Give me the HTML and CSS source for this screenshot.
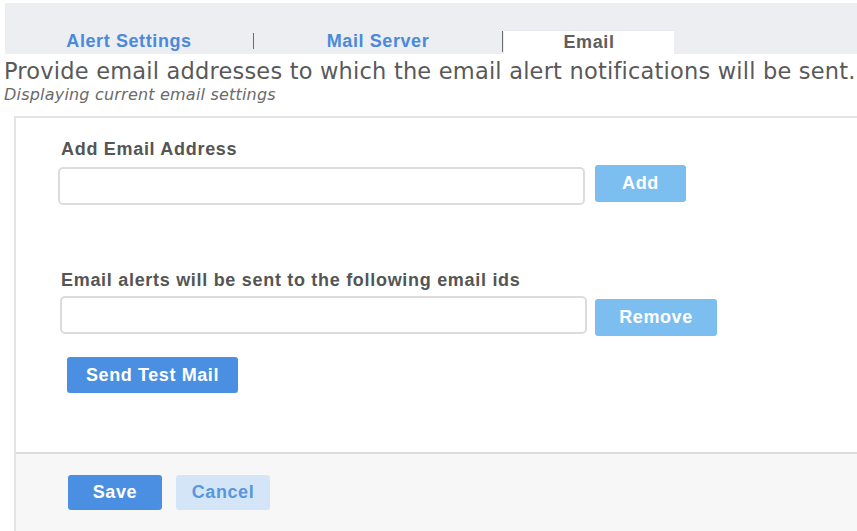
FILE: index.html
```html
<!DOCTYPE html>
<html lang="en">
<head>
<meta charset="utf-8">
<title>Email Settings</title>
<link rel="stylesheet" href="styles.css">
</head>
<body>
  <nav class="tabbar">
    <a class="tab">Alert Settings</a>
    <span class="sep"></span>
    <a class="tab">Mail Server</a>
    <span class="sep sep-tall"></span>
    <a class="tab tab-active">Email</a>
  </nav>

  <h1 class="intro">Provide email addresses to which the email alert notifications will be sent.</h1>
  <p class="status">Displaying current email settings</p>

  <section class="panel">
    <div class="panel-body">
      <label class="field-label">Add Email Address</label>
      <div class="field-row">
        <input class="text-input" type="text">
        <button class="btn btn-light btn-add">Add</button>
      </div>

      <label class="field-label label-list">Email alerts will be sent to the following email ids</label>
      <div class="field-row row-list">
        <input class="text-input input-list" type="text">
        <button class="btn btn-light btn-remove">Remove</button>
      </div>

      <button class="btn btn-primary btn-test">Send Test Mail</button>
    </div>
    <footer class="panel-footer">
      <button class="btn btn-primary btn-save">Save</button>
      <button class="btn btn-soft btn-cancel">Cancel</button>
    </footer>
  </section>
</body>
</html>
```

FILE: styles.css
```css
html, body {
  margin: 0;
  padding: 0;
  background: #ffffff;
  font-family: "Liberation Sans", Arial, sans-serif;
  overflow: hidden;
}

/* top tab strip */
.tabbar {
  margin: 3px 0 0 5px;
  height: 51px;
  background: #eceef1;
  display: flex;
  align-items: flex-end;
}

.tab {
  width: 248px;
  text-align: center;
  font-weight: bold;
  font-size: 18px;
  letter-spacing: 0.6px;
  color: #4b89dc;
  line-height: 22px;
  padding-bottom: 2px;
}

.sep {
  width: 1px;
  height: 16px;
  background: #6b6b6b;
  align-self: flex-end;
  margin-bottom: 5px;
}

.sep-tall {
  height: 21px;
  margin-bottom: 2px;
}

.tab-active {
  margin-left: 1px;
  width: 170px;
  height: 23px;
  background: #ffffff;
  color: #5e5e5e;
  border-top: 1px solid #e2e6ee;
  padding-bottom: 0;
}

/* heading lines */
.intro {
  margin: 2px 0 0 4px;
  font-family: "DejaVu Sans", Verdana, sans-serif;
  font-size: 22.5px;
  letter-spacing: 0.2px;
  font-weight: normal;
  line-height: 30px;
  color: #595959;
  white-space: nowrap;
}

.status {
  margin: 0 0 0 4px;
  font-family: "DejaVu Sans", Verdana, sans-serif;
  font-size: 16px;
  letter-spacing: 0.2px;
  font-style: italic;
  line-height: 18px;
  color: #6a6a6a;
}

/* settings panel */
.panel {
  margin: 12px 0 0 14px;
  border-top: 2px solid #e3e3e3;
  border-left: 2px solid #e3e3e3;
}

.panel-body {
  height: 334px;
  padding: 19px 0 0 42px;
  box-sizing: border-box;
}

.field-label {
  display: block;
  font-weight: bold;
  font-size: 18px;
  letter-spacing: 0.7px;
  line-height: 24px;
  color: #555555;
  margin-left: 3px;
}

.field-row {
  display: flex;
  align-items: flex-start;
  gap: 10px;
  margin-top: 4px;
}

.text-input {
  width: 527px;
  height: 38px;
  box-sizing: border-box;
  border: 2px solid #dcdcdc;
  border-radius: 5px;
  background: #ffffff;
  margin: 2px 0 0 0;
}

.input-list {
  margin-left: 2px;
  width: 527px;
  margin-top: 0;
}

.label-list {
  margin-top: 63px;
}

.row-list {
  margin-top: 4px;
  gap: 8px;
}

.btn {
  border: none;
  border-radius: 3px;
  font-family: "Liberation Sans", Arial, sans-serif;
  font-weight: bold;
  font-size: 18px;
  letter-spacing: 0.6px;
  color: #ffffff;
  cursor: pointer;
  padding: 0;
}

.btn-light {
  background: #7dbef0;
  height: 37px;
}

.btn-add {
  width: 91px;
}

.btn-remove {
  width: 122px;
  margin-top: 3px;
}

.btn-primary {
  background: #4a8fe1;
}

.btn-test {
  display: block;
  width: 171px;
  height: 36px;
  margin: 21px 0 0 9px;
}

.panel-footer {
  border-top: 2px solid #dcdcdc;
  background: #f7f7f7;
  height: 80px;
  padding: 21px 0 0 52px;
  box-sizing: border-box;
  display: flex;
  gap: 14px;
  align-items: flex-start;
}

.btn-save {
  width: 94px;
  height: 35px;
}

.btn-soft {
  background: #d4e5f7;
  color: #5a96dd;
}

.btn-cancel {
  width: 94px;
  height: 35px;
}
```
